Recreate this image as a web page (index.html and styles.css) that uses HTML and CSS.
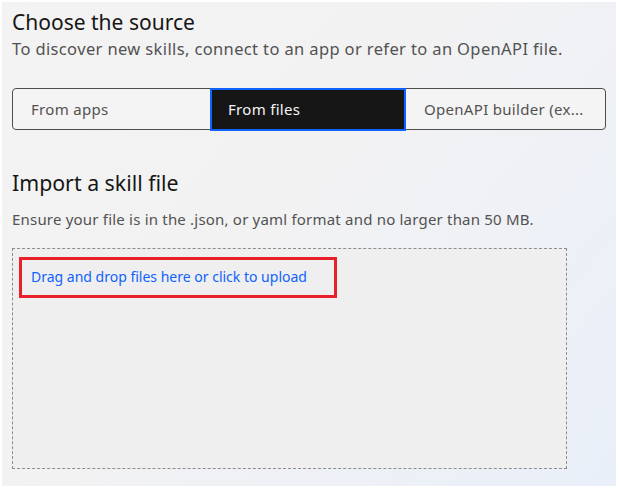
FILE: index.html
```html
<!DOCTYPE html>
<html>
<head>
<meta charset="utf-8">
<link rel="stylesheet" href="styles.css">
</head>
<body>
<div class="frame">
  <div class="panel">
    <h1 class="title">Choose the source</h1>
    <p class="subtitle">To discover new skills, connect to an app or refer to an OpenAPI file.</p>
    <div class="tabs">
      <div class="tab">From apps</div>
      <div class="tab tab-active">From files</div>
      <div class="tab">OpenAPI builder (ex...</div>
    </div>
    <h2 class="section-title">Import a skill file</h2>
    <p class="helper">Ensure your file is in the .json, or yaml format and no larger than 50 MB.</p>
    <div class="dropzone">
      <div class="highlight">
        <span class="link">Drag and drop files here or click to upload</span>
      </div>
    </div>
  </div>
</div>
</body>
</html>
```
FILE: styles.css
```css
html, body {
  margin: 0;
  padding: 0;
  background: #ffffff;
}
body {
  font-family: "Noto Sans", "Open Sans", sans-serif;
}
.frame {
  width: 619px;
  height: 488px;
  box-sizing: border-box;
  padding: 2px 3px 2px 2px;
}
.panel {
  height: 100%;
  box-sizing: border-box;
  background: linear-gradient(130deg, #f3f3f3 0%, #f2f2f3 45%, #e9eff9 100%);
  padding: 5px 0 0 10px;
}
.title {
  margin: 0;
  font-size: 21px;
  font-weight: 400;
  line-height: 30px;
  color: #161616;
}
.subtitle {
  margin: 1px 0 0;
  font-size: 16.5px;
  letter-spacing: 0.37px;
  line-height: 22px;
  color: #525252;
}
.tabs {
  margin-top: 28px;
  width: 594px;
  height: 42px;
  box-sizing: border-box;
  border: 1.5px solid #4d4d4d;
  border-radius: 4px;
  display: flex;
  background: #f4f4f4;
}
.tab {
  width: 197px;
  box-sizing: border-box;
  padding-left: 18px;
  display: flex;
  align-items: center;
  font-size: 15px;
  letter-spacing: 0.3px;
  color: #525252;
}
.tab-active {
  background: #161616;
  color: #f4f4f4;
  border: 2px solid #0f62fe;
  margin: -1.5px 0;
  height: 43px;
  width: 196px;
  padding-left: 16px;
}
.section-title {
  margin: 38px 0 0;
  font-size: 21.3px;
  font-weight: 400;
  line-height: 30px;
  color: #161616;
}
.helper {
  margin: 11px 0 0;
  font-size: 15px;
  letter-spacing: 0.2px;
  line-height: 20px;
  color: #525252;
}
.dropzone {
  margin-top: 19px;
  width: 555px;
  height: 221px;
  box-sizing: border-box;
  border: 1px dashed #8d8d8d;
  background: #efefef;
  padding: 8px 0 0 6px;
}
.highlight {
  width: 318px;
  height: 41px;
  box-sizing: border-box;
  border: 3px solid #e8202a;
  display: flex;
  align-items: center;
  padding: 0 0 2px 9px;
}
.link {
  font-size: 14px;
  color: #0f62fe;
}
```
